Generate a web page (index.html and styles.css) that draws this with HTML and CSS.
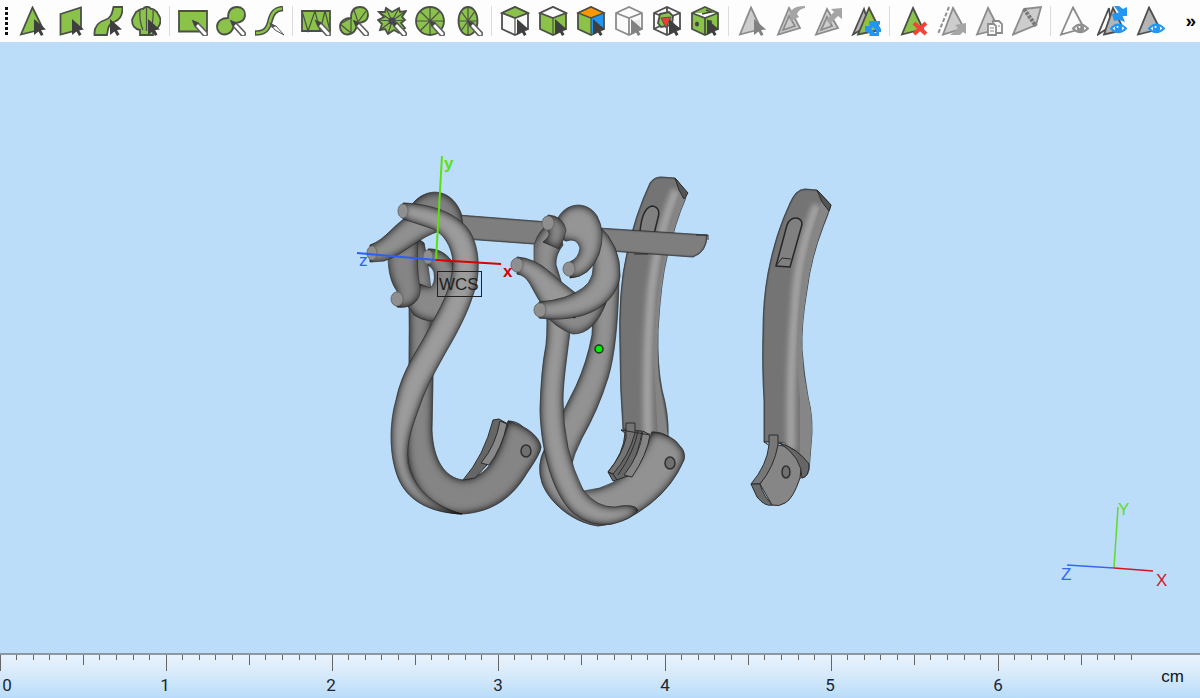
FILE: index.html
```html
<!DOCTYPE html>
<html lang="en">
<head>
<meta charset="utf-8">
<meta name="viewport" content="width=device-width, initial-scale=1">
<title>Model viewer</title>
<link rel="stylesheet" href="styles.css">
</head>
<body>
<svg class="defs" aria-hidden="true">
  <defs>
    <g id="cursor"><path d="M17 13L29 23.500L24 24L26.500 28.500L24 30L21.500 25.500L17 29Z" fill="#3f3f3f"/></g>
    <g id="pen"><path d="M15 15L20 17L29 26.500Q30 29 28 30Q26 30.500 25 29L17 20Z" fill="#fff" stroke="#606060" stroke-width="1.600"/><path d="M14 14L21 17L17 21Z" fill="#444"/></g>
    <g id="eye"><path d="M14 22.500Q21 14.500 29 22.500Q21 30 14 22.500Z" fill="#fff" stroke="currentColor" stroke-width="2"/><circle cx="21.500" cy="22.300" r="3.700" fill="currentColor"/><circle cx="20.500" cy="21" r="1" fill="#fff"/></g>
  </defs>
</svg>

<header class="toolbar" role="toolbar" aria-label="Marking tools">
  <span class="grip"></span>
  <button class="tool" aria-label="Mark triangle"><svg viewBox="0 0 30 30"><path class="g" d="M15.500 1.500L26 23L4 28.500Z"/><use href="#cursor"/></svg></button>
  <button class="tool" aria-label="Mark plane"><svg viewBox="0 0 30 30"><path class="g" d="M5.500 8L26 1.500V23L5.500 28.500Z"/><use href="#cursor"/></svg></button>
  <button class="tool" aria-label="Mark surface"><svg viewBox="0 0 30 30"><path class="g" d="M20.500 1H29.500C29.500 11 26 14 21 16C15 18 15 23 14 29H1.500C1 21 5 16 12 14C18 12 19 8 20.500 1Z"/><use href="#cursor"/></svg></button>
  <button class="tool" aria-label="Mark shell"><svg viewBox="0 0 30 30"><path class="g" d="M9 29V24C3 23 1 19 1 14C2 10 4 9 5 6C8 5 9 2 12 3C14 0 18 0 20 3C23 2 24 5 26 6C27 9 30 11 29.500 15C29 20 27 23 22 24V29Z"/><path class="l" d="M15.500 2V25M9 4Q8 15 12 24M22 4Q23 15 19 24"/><use href="#cursor"/></svg></button>
  <span class="sep"></span>
  <button class="tool" aria-label="Rectangle marking"><svg viewBox="0 0 30 30"><path class="g" d="M1 5H29V25.500H1Z"/><use href="#pen"/></svg></button>
  <button class="tool" aria-label="Brush marking"><svg viewBox="0 0 30 30"><path class="g" d="M12 12C12 5 15 1 21 1C26 1 29 4 29 8.500C29 14 25 17 18 17C18 24 14 28.500 8 28.500C4 28.500 1 25 1 20.500C1 15 6 12 12 12Z"/><use href="#pen"/></svg></button>
  <button class="tool" aria-label="Curve marking"><svg viewBox="0 0 30 30"><path d="M1 27C10 27 14 24 16 15C18 7 21 3 29 2.500" fill="none" stroke="#4b4f48" stroke-width="5.600"/><path d="M2 27C10 27 14 24 16 15C18 7 21 3 28 2.500" fill="none" stroke="#8bc34a" stroke-width="2.600"/><path d="M16 18L22 20L30 29L21 24Z" fill="#fff" stroke="#555"/><path d="M15 16L22 20L18 22Z" fill="#555"/></svg></button>
  <span class="sep"></span>
  <button class="tool" aria-label="Mark triangles in rectangle"><svg viewBox="0 0 30 30"><path class="g" d="M1 5H29V25H1Z"/><path class="l" d="M1 5L7 25L14 5L19 25L24 5L29 25"/><use href="#pen"/></svg></button>
  <button class="tool" aria-label="Mark triangles with brush"><svg viewBox="0 0 30 30"><path class="g" d="M12 12C12 5 15 1 21 1C26 1 29 4 29 8.500C29 14 25 17 18 17C18 24 14 28.500 8 28.500C4 28.500 1 25 1 20.500C1 15 6 12 12 12Z"/><path class="l" d="M15 4L19 16L27 5M12 12L1 18M12 12L12 27M1 18L12 27"/><use href="#pen"/></svg></button>
  <button class="tool" aria-label="Mark star region"><svg viewBox="0 0 30 30"><path class="g" d="M9 2L15 6L22 2L23 6L29 5L25 11L28 14L24 17L28 22L22 27L17 24L11 28L8 23L3 24L5 18L1 14L7 11L2 6L8 6Z"/><path class="l" d="M15 15L9 2M15 15L22 2M15 15L29 5M15 15L28 14M15 15L11 28M15 15L3 24M15 15L1 14M15 15L2 6"/><circle cx="15" cy="15" r="3.500" fill="#444"/><use href="#pen"/></svg></button>
  <button class="tool" aria-label="Mark disc"><svg viewBox="0 0 30 30"><circle class="g" cx="15" cy="15" r="14"/><path class="l" d="M15 1V29M1 15H29M5 5L25 25M25 5L5 25"/><use href="#pen"/></svg></button>
  <button class="tool" aria-label="Mark ellipse"><svg viewBox="0 0 30 30"><ellipse class="g" cx="15" cy="15" rx="9.500" ry="14"/><path class="l" d="M15 1V29M6 15H24M8 5L22 25M22 5L8 25"/><use href="#pen"/></svg></button>
  <span class="sep"></span>
  <button class="tool" aria-label="Select top face"><svg viewBox="0 0 30 30"><path class="w" d="M2 7L15 1L28 7V23L15 29L2 23Z"/><path class="g" d="M2 7L15 1L28 7L15 12Z"/><path class="l" d="M15 12V29"/><use href="#cursor"/></svg></button>
  <button class="tool" aria-label="Select side faces"><svg viewBox="0 0 30 30"><path class="g" d="M2 7L15 1L28 7V23L15 29L2 23Z"/><path class="w" d="M2 7L15 1L28 7L15 12Z"/><path class="l" d="M15 12V29"/><use href="#cursor"/></svg></button>
  <button class="tool" aria-label="Select coloured faces"><svg viewBox="0 0 30 30"><path class="g" d="M2 7L15 1L28 7V23L15 29L2 23Z"/><path fill="#2196f3" d="M15 12L27 8V22L15 28Z"/><path fill="#ff9800" stroke="#4b4f48" stroke-width="1.500" d="M2 7L15 1L28 7L15 12Z"/><path class="l" d="M15 12V29"/><use href="#cursor"/></svg></button>
  <button class="tool faded" aria-label="Select hidden faces"><svg viewBox="0 0 30 30"><path class="w" d="M2 7L15 1L28 7V23L15 29L2 23ZM2 7L15 12L28 7M15 12V29"/><path d="M18 16L26 13V20L18 25Z" fill="#ddd"/><use href="#cursor"/></svg></button>
  <button class="tool" aria-label="Select inner shell"><svg viewBox="0 0 30 30"><path class="w" d="M2 7L15 1L28 7V23L15 29L2 23ZM2 7L15 12L28 7M15 12V29M15 1V9M2 23L10 19M28 23L21 19"/><path class="g" d="M8 8L17 6L21 10L20 19L9 21L6 17Z"/><path fill="#f33b32" stroke="#555" d="M9 12L19 11L14 22Z"/><use href="#cursor"/></svg></button>
  <button class="tool" aria-label="Select cavities"><svg viewBox="0 0 30 30"><path class="g" d="M2 7L15 1L28 7V23L15 29L2 23ZM2 7L15 12L28 7M15 12V29"/><path d="M12 8L21 6L16 4" fill="none" stroke="#444" stroke-width="1.500"/><ellipse cx="7" cy="18" rx="2" ry="2.500" fill="#444"/><circle cx="20" cy="16" r="2" fill="#444"/><use href="#cursor"/></svg></button>
  <span class="sep"></span>
  <button class="tool faded" aria-label="Mark part"><svg viewBox="0 0 30 30"><path class="s" d="M14 1.500L24 23L3 28.500Z"/><use href="#cursor"/></svg></button>
  <button class="tool faded" aria-label="Shrink marking"><svg viewBox="0 0 30 30"><path class="s" d="M14 2L25 22L3 28.500Z"/><path class="s" d="M14 10L20 20L8 24Z"/><path d="M30 0Q20 0 17 4L14 3L16 15L24 11L22 8Q24 3 30 2Z" fill="#777"/></svg></button>
  <button class="tool faded" aria-label="Grow marking"><svg viewBox="0 0 30 30"><path class="s" d="M14 3L25 22L3 28.500Z"/><path class="s" d="M14 11L19 20L8 24Z"/><path d="M29 2L18 3L21 6L13 14L17 18L25 10L29 13Z" fill="#777"/></svg></button>
  <button class="tool" aria-label="Invert marking"><svg viewBox="0 0 30 30"><path class="s" d="M13 3L18 19L2 28.500Z"/><path class="g" d="M18 2L29 24L7 28.500Z"/><path fill="#2196f3" d="M18 15H29V19L26 18L30 23V26H26L22 21L19 24ZM14 20H22L20 23L24 27L28 25V30H18L19 28L14 25Z"/></svg></button>
  <span class="sep"></span>
  <button class="tool" aria-label="Delete marked"><svg viewBox="0 0 30 30"><path class="g" d="M15 2L25 23L4 28.500Z"/><path d="M16 17L28 28M28 17L16 28" stroke="#f44336" stroke-width="4"/></svg></button>
  <button class="tool faded" aria-label="Move marked"><svg viewBox="0 0 30 30"><path class="s" d="M17 2L28 22L7 28.500Z"/><path d="M13 1L2 28" fill="none" stroke="#555" stroke-width="2" stroke-dasharray="4 2"/><path d="M30 17L19 19L22 22L14 29H24L27 26L30 28Z" fill="#777"/></svg></button>
  <button class="tool faded" aria-label="Copy marked"><svg viewBox="0 0 30 30"><path class="s" d="M14 2L25 23L3 28.500Z"/><path class="w" d="M14 18H20L22 20V29H14ZM19 15H25L28 18V27H22V20L20 18H19Z"/><path class="l" d="M16 22H20M16 25H20M24 20H26"/></svg></button>
  <button class="tool faded" aria-label="Separate marked"><svg viewBox="0 0 30 30"><path class="s" d="M12 3L29 1L24 19L1 28.500Z"/><path d="M12 3L24 20" stroke="#333" stroke-width="4" stroke-dasharray="3 1"/></svg></button>
  <span class="sep"></span>
  <button class="tool faded" aria-label="Hide marked"><svg viewBox="0 0 30 30"><path class="w" d="M14 1.500L25 22L2 28.500Z"/><use href="#eye" color="#555"/></svg></button>
  <button class="tool" aria-label="Toggle visibility"><svg viewBox="0 0 30 30"><path class="w" d="M12 2L14 20L1 28.500Z"/><path class="s" d="M16 2L27 24L7 28.500Z"/><path fill="#2196f3" d="M17 0H22L26 3L30 1V10H20L23 8ZM15 8L24 6L28 16L22 14L17 15Z"/><use href="#eye" color="#2196f3"/></svg></button>
  <button class="tool" aria-label="Show marked"><svg viewBox="0 0 30 30"><path class="s" d="M14 1.500L25 23L3 28.500Z"/><use href="#eye" color="#2196f3"/></svg></button>
  <button class="more" aria-label="More tools">»</button>
</header>

<main class="viewport">
<svg class="scene" viewBox="0 42 1200 611" role="img" aria-label="Earring model in three parts">
  <defs>
    <filter id="round" x="-10%" y="-10%" width="120%" height="120%" color-interpolation-filters="sRGB">
      <feComponentTransfer in="SourceAlpha" result="inv"><feFuncA type="table" tableValues="1 0"/></feComponentTransfer>
      <feGaussianBlur in="inv" stdDeviation="4" result="soft"/>
      <feComposite in="soft" in2="SourceAlpha" operator="in" result="edge"/>
      <feMerge><feMergeNode in="SourceGraphic"/><feMergeNode in="edge"/></feMerge>
    </filter>
    <filter id="flat" x="-10%" y="-10%" width="120%" height="120%" color-interpolation-filters="sRGB">
      <feComponentTransfer in="SourceAlpha" result="inv"><feFuncA type="table" tableValues="1 0"/></feComponentTransfer>
      <feGaussianBlur in="inv" stdDeviation="1" result="soft"/>
      <feComposite in="soft" in2="SourceAlpha" operator="in" result="edge"/>
      <feMerge><feMergeNode in="SourceGraphic"/><feMergeNode in="edge"/></feMerge>
    </filter>
    <filter id="glow" x="-100%" y="-20%" width="300%" height="140%"><feGaussianBlur stdDeviation="2.500"/></filter>
    <clipPath id="clipA"><path d="M650 183Q654 177 661 177L675 178L687 193L685 200Q676 220 667 257Q661 280 658 330Q657 365 662 390Q669 415 668 437L623 429Q620 390 620 350Q618 290 627 253Q635 215 650 183Z"/></clipPath>
    <clipPath id="clipB"><path d="M790 203Q796 189 805 189L817 190L831 205Q829 212 823 227Q811 258 807 290Q801 325 802 350Q804 375 808 397Q814 420 811 445L809 470Q807 478 800 478L785 443L764 442V400Q762 370 763 330Q763 300 768 273Q775 235 790 203Z"/></clipPath>
  </defs>

  <!-- long clip, left -->
  <g class="flat">
    <path fill="#747474" d="M650 183Q654 177 661 177L675 178L687 193L685 200Q676 220 667 257Q661 280 658 330Q657 365 662 390Q669 415 668 437L623 429Q620 390 620 350Q618 290 627 253Q635 215 650 183Z"/>
  </g>
  <g clip-path="url(#clipA)">
    <path class="sheen" d="M676 190Q654 245 650 310Q646 370 648 440"/>
    <path fill="#858585" d="M687 193L685 200Q667 245 663 290Q655 340 659 380L668 437H658Q656 400 654 365Q654 270 680 193Z"/>
  </g>
  <path fill="#555" class="edge" d="M675 178L688 193L684 199L679 190Z"/>
  <path class="slot" d="M640 232Q642 208 652 206Q661 207 658 218L654 234Z"/>

  <!-- pin bar -->
  <g class="flat">
    <path fill="#7e7e7e" d="M458 215L548 222V245L465 239Z"/>
    <path fill="#7e7e7e" d="M598 228L707 235Q707 252 693 257L610 251Z"/>
  </g>
  <path class="edge" d="M696 235H708V240M634 254H648"/>

  <!-- left earring -->
  <g class="tube">
    <path fill="#858585" d="M409 295Q410 360 407 440C405 490 435 514 462 514C495 512 514 495 527 473Q541 453 541 447C540 438 528 426 508 421C500 452 489 478 463 480C445 478 433 460 432 430L433 377L431 310Z"/>
    <path fill="#808080" d="M403 225C410 188 448 180 461 213Q464 226 463 245L440 222Z"/>
    <path fill="#8c8c8c" d="M417 238L424 243Q428 262 431 290L415 292Z"/>
    <path fill="#898989" d="M428 249C444 248 458 262 459 284Q459 306 444 320Q428 324 414 315L405 302L420 284L430 288Q436 283 434 272Q433 268 428 265Z"/>
    <path fill="#858585" d="M388 254C388 274 392 284 397 291V307C411 309 421 301 420 287Q416 270 418 238Z"/>
    <path fill="#909090" d="M370 245C386 240 394 223 412 214L450 218L440 231C420 236 405 254 384 261L370 262Z"/>
    <path fill="#9c9c9c" d="M403 203C430 204 455 212 468 229C480 245 481 275 473 295C468 312 456 335 447 350C437 368 427 385 420 405C413 425 406 440 408 463C413 486 430 505 462 514C432 513 410 502 400 482C390 462 388 428 396 400C402 370 418 350 427 332C440 308 452 290 453 262C452 246 443 233 433 229C422 225 412 222 403 219Z"/>
  </g>
  <g class="cap"><ellipse cx="403" cy="211" rx="5" ry="7"/><ellipse cx="372" cy="253" rx="5" ry="7"/><ellipse cx="397" cy="299" rx="6" ry="7"/><ellipse cx="428" cy="257" rx="5" ry="7"/></g>
  <path fill="#666" class="edge" d="M463 480Q484 456 493 420L499 419L508 424Q504 440 487 465L475 478Z"/>
  <path fill="#898989" class="edge" d="M500 421L507 424Q502 448 489 465L481 463Q496 445 500 421Z"/>
  <path class="edge" d="M508 421Q517 421 523 427"/>
  <ellipse class="hinge" cx="526" cy="451" rx="5" ry="6"/>

  <!-- right earring -->
  <g class="tube">
    <path fill="#929292" d="M594 300L619 275Q618 345 608 378Q598 410 582 438Q574 453 570 470L584 491Q617 488 635 463Q648 445 652 432Q672 434 680 446Q686 452 684 460Q673 486 650 504Q625 524 598 526C570 522 548 500 542 483Q536 465 545 448Q560 418 576 386Q587 362 592 335Z"/>
    <path fill="#989898" d="M546 300L572 315C568 350 563 380 563 400Q563 450 583 490Q597 508 615 507Q634 503 638 510Q633 519 612 524Q590 527 573 513C552 493 541 450 540 410Q541 370 546 345Q548 325 546 300Z"/>
    <path fill="#8e8e8e" d="M534 245Q540 225 556 222L563 245Q555 255 556 265Q560 277 564 292L543 300L534 265Z"/>
    <path fill="#8a8a8a" d="M541 310Q565 315 607 300Q595 334 573 334Q555 328 541 310Z"/>
    <path fill="#989898" d="M517 257Q534 258 550 272Q562 283 578 295L575 318L547 312Q537 298 530 284Q525 275 517 274Z"/>
    <path fill="#969696" d="M598 225Q621 245 620 276C617 296 602 310 580 316Q560 321 539 318V302Q567 300 583 288Q597 278 592 255Z"/>
    <path fill="#959595" d="M557 220C565 202 587 200 597 216Q606 232 599 254Q590 277 570 278V262Q579 258 580 248Q577 237 566 241L560 238Z"/>
    <path fill="#8a8a8a" d="M548 215Q563 216 566 230Q564 240 559 249L543 242Q552 235 548 231Z"/>
  </g>
  <g class="cap"><ellipse cx="548" cy="223" rx="6" ry="7"/><ellipse cx="517" cy="265" rx="6" ry="7"/><ellipse cx="569" cy="269" rx="6" ry="7"/><ellipse cx="540" cy="310" rx="6" ry="7"/></g>
  <path fill="#666" class="edge" d="M621 430L642 431Q640 449 628 476L613 481L608 472Q624 453 625 433Z"/>
  <path fill="#747474" class="edge" d="M626 423H635V433Q629 456 613 474L608 472Q622 455 626 438Z"/>
  <path fill="#858585" class="edge" d="M643 431L650 435Q647 455 632 477L624 475Q640 455 643 431Z"/>
  <path class="edge" d="M638 431Q634 452 618 475M621 430L650 435M652 432Q663 432 668 437M608 472L613 474L617 480"/>
  <ellipse class="hinge" cx="670" cy="463" rx="5" ry="6"/>

  <!-- long clip, right -->
  <g class="flat">
    <path fill="#747474" d="M790 203Q796 189 805 189L817 190L831 205Q829 212 823 227Q811 258 807 290Q801 325 802 350Q804 375 808 397Q814 420 811 445L809 470Q807 478 800 478L785 443L764 442V400Q762 370 763 330Q763 300 768 273Q775 235 790 203Z"/>
  </g>
  <g clip-path="url(#clipB)">
    <path class="sheen" d="M817 205Q797 255 795 310Q790 370 791 450"/>
    <path fill="#868686" d="M831 205Q812 250 807 290Q800 335 804 375L815 430V480H800V400Q796 360 798 320Q802 260 822 199Z"/>
  </g>
  <path fill="#555" class="edge" d="M817 190L831 205L829 211L822 202Z"/>
  <path class="edge" d="M764 442L770 446M778 443Q799 448 809 466"/>
  <path class="slot" d="M776 266L787 225Q790 217 797 218Q804 220 801 228L790 267Z"/>
  <path class="edge" d="M782 258L791 259M776 266L782 258"/>
  <path fill="#777" class="edge" d="M769 435H778V448Q773 470 760 484L751 484Q767 465 769 445Z"/>
  <path fill="#6b6b6b" class="edge" d="M751 484H760Q764 498 773 505Q765 507 757 497Z"/>
  <path fill="#868686" class="edge" d="M778 445Q793 446 802 460L800 478Q793 499 785 503Q779 507 772 505L760 484Q774 467 778 445Z"/>
  <path fill="#666" class="edge" d="M780 443Q798 449 809 464Q809 477 802 478Q802 458 780 443Z"/>
  <ellipse class="hinge" cx="786" cy="472" rx="4" ry="6"/>

  <circle cx="599" cy="349" r="4" fill="#00ef00" stroke="#103a10" stroke-width="1.500"/>

  <!-- work coordinate system -->
  <g class="axis" stroke-width="2">
    <path stroke="#5be010" d="M436 260L442 156"/>
    <path stroke="#d80000" d="M436 260L501 264"/>
    <path stroke="#2c60f5" d="M357 253L436 260"/>
  </g>
  <text class="letter heavy" x="444" y="169" fill="#5be010">y</text>
  <text class="letter heavy" x="503" y="277" fill="#d80000">x</text>
  <text class="letter" x="359" y="266" fill="#2c60f5">z</text>
  <rect x="437.500" y="271.500" width="44" height="25" fill="none" stroke="#222"/>
  <text class="letter" x="439" y="290" fill="#222">WCS</text>

  <!-- orientation triad -->
  <g class="axis" stroke-width="1.500">
    <path stroke="#62d92c" d="M1114 568L1118 507"/>
    <path stroke="#d01820" d="M1114 568L1153 571"/>
    <path stroke="#3467f2" d="M1067 565L1114 568"/>
  </g>
  <text class="letter" x="1118" y="515" fill="#62d92c">Y</text>
  <text class="letter" x="1156" y="586" fill="#d01820">X</text>
  <text class="letter" x="1061" y="580" fill="#3467f2">Z</text>
</svg>
</main>

<footer class="ruler">
  <svg class="scale" aria-label="Scale in centimetres">
    <defs>
      <g id="unit">
        <path d="M0.500 0V16M83.500 0V10M16.500 0V5M33.500 0V5M49.500 0V5M66.500 0V5M99.500 0V5M116.500 0V5M133.500 0V5M149.500 0V5"/>
      </g>
      <clipPath id="end"><rect width="1133" height="43"/></clipPath>
    </defs>
    <g class="ticks" clip-path="url(#end)">
      <use href="#unit"/><use href="#unit" x="166"/><use href="#unit" x="332"/><use href="#unit" x="498"/><use href="#unit" x="665"/><use href="#unit" x="831"/><use href="#unit" x="998"/>
    </g>
    <g class="digits">
      <text x="7" y="36">0</text><text x="165" y="36">1</text><text x="331" y="36">2</text><text x="498" y="36">3</text><text x="665" y="36">4</text><text x="830" y="36">5</text><text x="998" y="36">6</text>
    </g>
  </svg>
  <span class="unit">cm</span>
</footer>
</body>
</html>
```
FILE: styles.css
```css
* { box-sizing: border-box; }

body {
  margin: 0;
  height: 100vh;
  display: flex;
  flex-direction: column;
  overflow: hidden;
  background: #bbddfa;
  font-family: "Liberation Sans", Arial, sans-serif;
}

.defs { position: absolute; width: 0; height: 0; }

.toolbar {
  display: flex;
  align-items: center;
  gap: 8px;
  padding: 6px 4px;
  background: #fdfdfd;
}

.grip {
  width: 5px;
  height: 28px;
  background: repeating-linear-gradient(#111 0 3px, transparent 3px 5px) center / 3px 100% no-repeat;
}

.tool {
  flex: none;
  width: 30px;
  height: 30px;
  padding: 0;
  border: 0;
  background: none;
}

.tool svg { display: block; width: 30px; height: 30px; }
.faded svg { opacity: 0.65; }
.g { fill: #8bc34a; stroke: #4b4f48; stroke-width: 1.8; }
.w { fill: #fafafa; stroke: #4f4f4f; stroke-width: 1.8; }
.s { fill: #b4b4b4; stroke: #4f4f4f; stroke-width: 1.8; }
.l { fill: none; stroke: #4b4f48; stroke-width: 1.2; }

.sep { flex: none; width: 1px; height: 30px; background: #dcdcdc; }

.more {
  margin-left: auto;
  padding: 0;
  border: 0;
  background: none;
  color: #000;
  font: bold 19px/30px "Liberation Sans", Arial, sans-serif;
}

.viewport { flex: 1; min-height: 0; }
.scene { display: block; width: 100%; height: 100%; }

.tube path { filter: url(#round); stroke: #454545; stroke-width: 0.6; }
.flat path { filter: url(#flat); stroke: #484848; stroke-width: 0.6; }
.sheen { fill: none; stroke: #a2a2a2; stroke-width: 9; filter: url(#glow); }
.edge { stroke: #2c2c2c; stroke-width: 1; }
.edge:not([fill]) { fill: none; }
.slot { fill: #808080; stroke: #272727; stroke-width: 1.5; }
.hinge { fill: #707070; stroke: #303030; stroke-width: 1.5; }
.cap ellipse { fill: #8f8f8f; stroke: #6b6b6b; stroke-width: 1; }

.axis { fill: none; }
.letter { font: 17px "Liberation Sans", Arial, sans-serif; }
.heavy { font-weight: bold; }

.ruler {
  display: flex;
  height: 45px;
  padding-right: 16px;
  border-top: 2px solid #8e979f;
  background: linear-gradient(#e8f3fd 0%, #d7eafb 45%, #b9dcfa 100%);
}

.scale { flex: 1; min-width: 0; height: 43px; }
.ticks { fill: none; stroke: #666; stroke-width: 1; shape-rendering: crispEdges; }
.digits { font: 17px Roboto, sans-serif; fill: #1c2730; text-anchor: middle; }
.unit { font-size: 17px; line-height: 43px; color: #101418; }
```
